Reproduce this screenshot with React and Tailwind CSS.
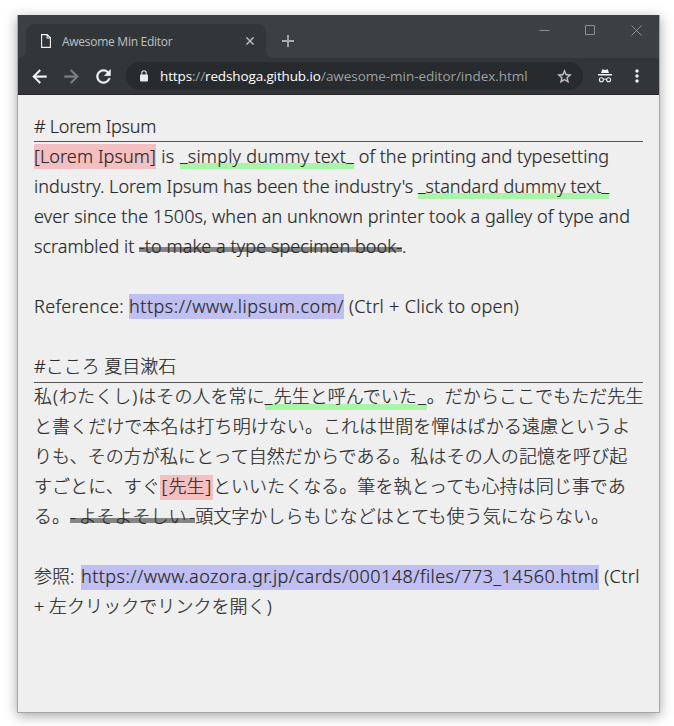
const CORNER = 'h-2 w-2 self-end bg-[#323639]';

function Tab() {
  return (
    <>
      <div className={CORNER}><div className="h-2 w-2 rounded-br-lg bg-[#3c4043]" /></div>
      <div className="mt-[9px] flex h-[34px] w-60 items-center rounded-t-lg bg-[#323639] pl-[15px] pr-[12px]">
        <svg className="h-[14px] w-[10px]" viewBox="0 0 10 14" fill="none" stroke="#f1f3f4" strokeWidth="1.1">
          <path d="M.6.6h5.6l3.2 3.2v9.6H.6zM6.1.6v3.4h3.3" />
        </svg>
        <span className="ml-[11px] flex-1 whitespace-nowrap pt-px font-['Open_Sans',sans-serif] text-[12px] leading-4 tracking-[-0.27px] text-[#bdc1c6]">Awesome Min Editor</span>
        <svg className="h-[8px] w-[8px]" viewBox="0 0 8 8" stroke="#b8bcc0" strokeWidth="1.5">
          <path d="M.4.4l7.2 7.2M7.6.4L.4 7.6" />
        </svg>
      </div>
      <div className={CORNER}><div className="h-2 w-2 rounded-bl-lg bg-[#3c4043]" /></div>
    </>
  );
}

function TitleBar() {
  return (
    <div className="flex h-[43px] bg-[#3c4043]">
      <Tab />
      <svg className="ml-[8px] mt-[20px] h-[12px] w-[12px]" viewBox="0 0 12 12" stroke="#a9abac" strokeWidth="1.8">
        <path d="M6 0v12M0 6h12" />
      </svg>
      <div className="ml-auto mr-[17px] mt-[10px] flex h-[11px] gap-[35px]">
        <svg className="h-[11px] w-[11px]" viewBox="0 0 11 11" stroke="#8e8e8e"><path d="M.5 5.5h10" /></svg>
        <svg className="h-[11px] w-[11px]" viewBox="0 0 11 11" fill="none" stroke="#8e8e8e"><path d="M.5.5h9v9h-9z" /></svg>
        <svg className="h-[11px] w-[11px]" viewBox="0 0 11 11" stroke="#8e8e8e"><path d="M.5.5l10 10M10.500.5l-10 10" /></svg>
      </div>
    </div>
  );
}

function Toolbar() {
  return (
    <div className="flex h-[37px] items-center border-b border-[#2a2628] bg-[#323639] pl-[11px]">
      <svg className="h-[21px] w-[21px]" viewBox="0 0 24 24" fill="#f1f3f4" stroke="#f1f3f4" strokeWidth=".5"><path d="M20 11H7.830l5.590-5.590L12 4l-8 8 8 8 1.410-1.410L7.830 13H20v-2z" /></svg>
      <svg className="ml-[11px] h-[21px] w-[21px]" viewBox="0 0 24 24" fill="#7b8288" stroke="#7b8288" strokeWidth=".5"><path d="M12 4l-1.410 1.410L16.170 11H4v2h12.170l-5.580 5.590L12 20l8-8z" /></svg>
      <svg className="ml-[11px] h-[21px] w-[21px]" viewBox="0 0 24 24" fill="#f1f3f4" stroke="#f1f3f4" strokeWidth=".5"><path d="M17.650 6.350C16.200 4.900 14.210 4 12 4c-4.420 0-7.990 3.580-7.990 8s3.570 8 7.990 8c3.730 0 6.840-2.550 7.730-6h-2.080c-.82 2.330-3.040 4-5.650 4-3.310 0-6-2.690-6-6s2.690-6 6-6c1.660 0 3.140.69 4.220 1.780L13 11h7V4l-2.350 2.350z" /></svg>
      <div className="ml-[12px] flex h-7 w-[457px] items-center rounded-full bg-[#282b2d] pl-[14px] pr-[10px] font-['Open_Sans',sans-serif] text-[13.5px]">
        <svg className="mb-px h-[12px] w-[8px]" viewBox="0 0 8 12" fill="#e8eaed"><path d="M1 4.500h6a1 1 0 011 1V10.500a1 1 0 01-1 1H1a1 1 0 01-1-1v-5a1 1 0 011-1z" /><path d="M1.800 5V2.900a2.200 2.200 0 014.400 0V5" fill="none" stroke="#e8eaed" strokeWidth="1.100" /></svg>
        <div className="ml-[12px] flex whitespace-pre leading-7">
          <div className="w-[161px] tracking-[-0.13px] text-white">https<span className="text-[#9aa0a6]">://</span>redshoga.github.io</div>
          <div className="tracking-[-0.04px] text-[#9aa0a6]">/awesome-min-editor/index.html</div>
        </div>
        <svg className="ml-auto h-[17px] w-[17px]" viewBox="0 0 24 24" fill="#c4c7ca" stroke="#c4c7ca" strokeWidth=".4"><path d="M22 9.240l-7.190-.62L12 2 9.190 8.630 2 9.240l5.460 4.730L5.820 21 12 17.270 18.180 21l-1.630-7.030L22 9.240zM12 15.400l-3.760 2.270 1-4.280-3.320-2.880 4.380-.38L12 6.100l1.710 4.040 4.380.38-3.320 2.880 1 4.280L12 15.400z" /></svg>
      </div>
      <svg className="ml-[15px] h-[14px] w-[14px]" viewBox="0 0 14 14" fill="#f1f3f4">
        <path d="M4.300.3L7 .9 9.700.3l1.300 3.700H3zM0 5h14v1.500H0z" />
        <g fill="none" stroke="#f1f3f4" strokeWidth="1.100"><circle cx="3.400" cy="10.800" r="2" /><circle cx="10.600" cy="10.800" r="2" /><path d="M5.400 10.500q1.600-.9 3.200 0" /></g>
      </svg>
      <svg className="ml-[23px] h-[14px] w-[4px]" viewBox="0 0 4 14" fill="#f1f3f4"><circle cx="2" cy="2" r="1.700" /><circle cx="2" cy="7" r="1.700" /><circle cx="2" cy="12" r="1.700" /></svg>
    </div>
  );
}

const BOX = 'h-[25px] mt-[2px] leading-[25px] shrink-0 ';
const PINK = BOX + 'bg-[#f4bfc0] ';
const BLUE = BOX + 'bg-[#bfbff1] ';
const GREEN = BOX + 'bg-[linear-gradient(transparent_19px,#a9f4a9_19px)] ';
const STRIKE = BOX + 'bg-[linear-gradient(transparent_13px,#858585_13px,#858585_18px,transparent_18px)] ';
// Japanese lines sit one pixel higher inside the same highlight box.
const JP = 'leading-[23px] tracking-[0.06px] ';

function Row({ children }) {
  return <div className="flex h-[30px] whitespace-pre">{children}</div>;
}

function T({ c = '', children }) {
  return <span className={BOX + c}>{children}</span>;
}

function J({ children }) {
  return <span className={'mt-[2px] h-[25px] shrink-0 ' + JP}>{children}</span>;
}

function Paren({ children }) {
  return <span className="mt-[2px] h-[25px] w-[7px] shrink-0 text-center leading-[23px]">{children}</span>;
}

function U() {
  return <span className="inline-block -translate-y-[2px]">_</span>;
}

function Heading({ children }) {
  return <div className="flex h-[31px] whitespace-pre border-b border-[#555]">{children}</div>;
}

function Editor() {
  return (
    <div className="h-[617px] bg-[#efefef] px-4 pt-4 font-['Noto_Sans','Noto_Sans_CJK_JP',sans-serif] text-[18px] font-light text-[#2a2a2a] [-webkit-text-stroke:0.2px_#2a2a2a]">
      <Heading><span className="mt-[3px] leading-[25px] tracking-[-0.25px]"># Lorem Ipsum</span></Heading>
      <Row>
        <span className={PINK + 'w-[122px] tracking-[0.11px]'}>[Lorem Ipsum]</span>
        <T c="w-[24px] tracking-[0.5px]"> is </T>
        <span className={GREEN + 'w-[174px] tracking-[0.23px]'}><U />simply dummy text<U /></span>
        <T c="tracking-[0.04px]"> of the printing and typesetting</T>
      </Row>
      <Row>
        <T c="w-[384px] tracking-[0.022px]">industry. Lorem Ipsum has been the industry's </T>
        <span className={GREEN + 'w-[191px] tracking-[0.033px]'}><U />standard dummy text<U /></span>
      </Row>
      <Row><T c="tracking-[0.088px]">ever since the 1500s, when an unknown printer took a galley of type and</T></Row>
      <Row>
        <T c="w-[105px] tracking-[0.012px]">scrambled it </T>
        <span className={STRIKE + 'w-[263px] tracking-[0.073px]'}>-to make a type specimen book-</span>
        <T>.</T>
      </Row>
      <Row />
      <Row>
        <T c="w-[95px] tracking-[0.345px]">Reference: </T>
        <span className={BLUE + 'w-[215px] tracking-[0.53px]'}>https://www.lipsum.com/</span>
        <T c="tracking-[0.3px]"> (Ctrl + Click to open)</T>
      </Row>
      <Row />
      <Heading><T>#こころ 夏目漱石</T></Heading>
      <Row>
        <J>私</J><Paren>(</Paren><J>わたくし</J><Paren>)</Paren><J>はその人を常に</J>
        <span className={GREEN + 'flex w-[162px]'}><span className="w-[9px]"><U /></span><span className="leading-[23px]">先生と呼んでいた</span><span className="w-[9px] text-right"><U /></span></span>
        <J>。だからここでもただ先生</J>
      </Row>
      <Row><J>と書くだけで本名は打ち明けない。これは世間を憚はばかる遠慮というよ</J></Row>
      <Row><J>りも、その方が私にとって自然だからである。私はその人の記憶を呼び起</J></Row>
      <Row>
        <J>すごとに、すぐ</J>
        <span className={PINK + 'flex w-[53px] justify-center gap-px'}><span className="leading-[23px]">[</span><span className="leading-[23px]">先生</span><span className="leading-[23px]">]</span></span>
        <J>といいたくなる。筆を執とっても心持は同じ事であ</J>
      </Row>
      <Row>
        <J>る。</J>
        <span className={STRIKE + 'flex w-[125px] justify-between'}><span className="leading-[23px]">-</span><span className="leading-[23px]">よそよそしい</span><span className="leading-[23px]">-</span></span>
        <J>頭文字かしらもじなどはとても使う気にならない。</J>
      </Row>
      <Row />
      <Row>
        <span className="mt-[2px] w-[47px] shrink-0 leading-[23px]">参照: </span>
        <span className={BLUE + 'w-[518px]'}><span className="block leading-[23px] tracking-[0.464px]">https://www.aozora.gr.jp/cards/000148/files/773_14560.html</span></span>
        <span className="mt-[2px] shrink-0 leading-[23px] tracking-[0.45px]"> (Ctrl</span>
      </Row>
      <Row><span className="mt-[2px] w-[15px] shrink-0 leading-[23px]">+ </span><J>左クリックでリンクを開く</J><Paren>)</Paren></Row>
    </div>
  );
}

export default function App() {
  return (
    <div className="h-[726px] w-[674px] overflow-hidden bg-white pl-[17px] pt-[15px]">
      <div className="h-[698px] w-[643px] border-x border-b border-[#a5a5a5] shadow-[0_3px_12px_rgba(0,0,0,0.35)]">
        <TitleBar />
        <Toolbar />
        <Editor />
      </div>
    </div>
  );
}
